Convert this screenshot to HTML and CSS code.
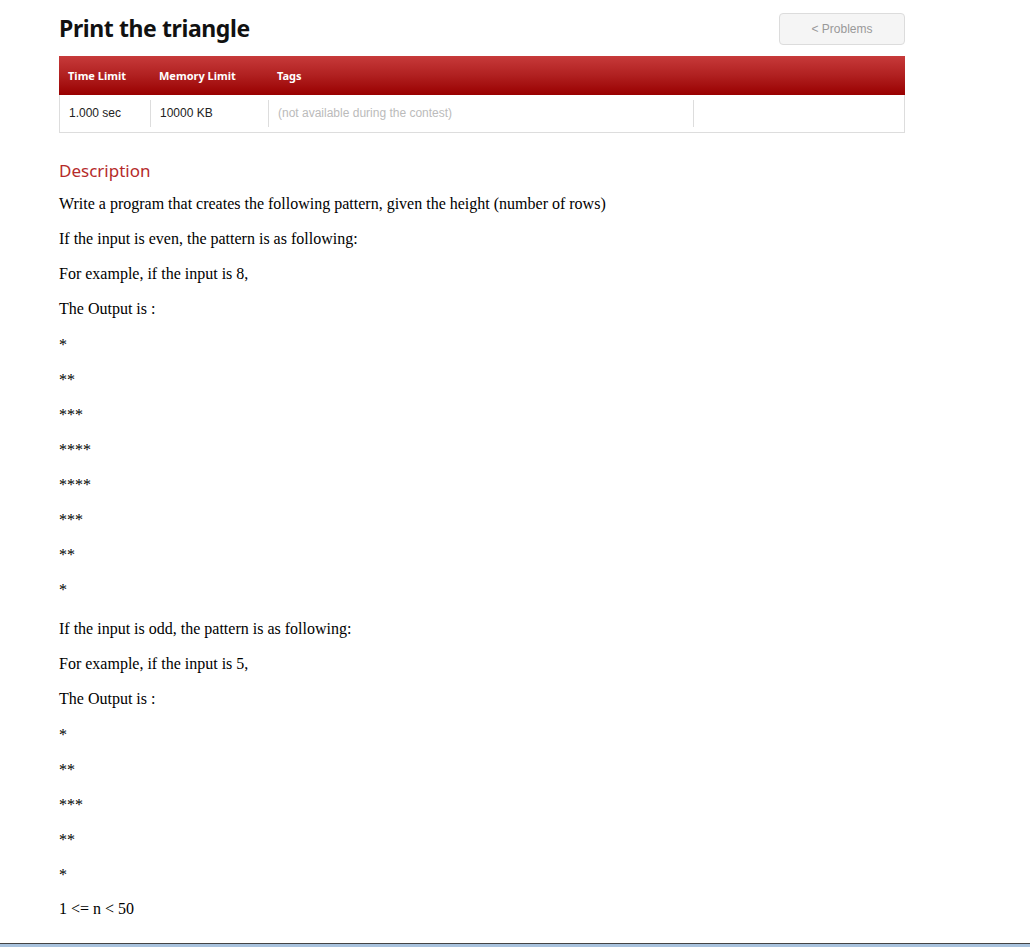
FILE: index.html
```html
<!DOCTYPE html>
<html>
<head>
<meta charset="utf-8">
<link rel="stylesheet" href="styles.css">
</head>
<body>
<div class="page">
  <div class="top">
    <h1 class="title">Print the triangle</h1>
    <a class="btn">&lt; Problems</a>
  </div>
  <div class="info">
    <div class="info-head">
      <div class="c1">Time Limit</div>
      <div class="c2">Memory Limit</div>
      <div class="c3">Tags</div>
      <div class="c4"></div>
    </div>
    <div class="info-body">
      <div class="c1">1.000 sec</div>
      <div class="c2 sep">10000 KB</div>
      <div class="c3 sep muted">(not available during the contest)</div>
      <div class="c4 sep"></div>
    </div>
  </div>
  <h2 class="section">Description</h2>
  <div class="desc">
    <p>Write a program that creates the following pattern, given the height (number of rows)</p>
    <p>If the input is even, the pattern is as following:</p>
    <p>For example, if the input is 8,</p>
    <p>The Output is :</p>
    <p class="star">*</p>
    <p class="star">**</p>
    <p class="star">***</p>
    <p class="star">****</p>
    <p class="star">****</p>
    <p class="star">***</p>
    <p class="star">**</p>
    <p class="star">*</p>
    <p class="gap">If the input is odd, the pattern is as following:</p>
    <p>For example, if the input is 5,</p>
    <p>The Output is :</p>
    <p class="star">*</p>
    <p class="star">**</p>
    <p class="star">***</p>
    <p class="star">**</p>
    <p class="star">*</p>
    <p>1 &lt;= n &lt; 50</p>
  </div>
</div>
<div class="bottombar"></div>
</body>
</html>
```
FILE: styles.css
```css
html, body {
  margin: 0;
  padding: 0;
  background: #fff;
}
body {
  font-family: "Liberation Serif", serif;
  color: #111;
}
.page {
  width: 846px;
  margin-left: 59px;
  padding-top: 13px;
}
.top {
  display: flex;
  justify-content: space-between;
  align-items: flex-start;
  height: 43px;
}
.title {
  margin: 0;
  font-family: "Noto Sans", sans-serif;
  font-weight: bold;
  font-size: 23px;
  line-height: 31px;
  color: #111;
  letter-spacing: -0.4px;
}
.btn {
  box-sizing: border-box;
  width: 126px;
  height: 32px;
  border: 1px solid #dcdcdc;
  border-radius: 4px;
  background: #f5f5f5;
  color: #999;
  font-family: "Liberation Sans", sans-serif;
  font-size: 12px;
  line-height: 30px;
  text-align: center;
}
.info {
  border: 1px solid #ddd;
  border-top: none;
}
.info-head {
  display: flex;
  height: 39px;
  margin: 0 -1px;
  background: linear-gradient(to bottom, #c73a3a 0%, #b02020 50%, #990000 100%);
  align-items: center;
  color: #fff;
  font-family: "Noto Sans", sans-serif;
  font-weight: bold;
  font-size: 11px;
}
.info-head > div {
  padding-left: 9px;
  box-sizing: border-box;
}
.c1 { width: 91px; }
.c2 { width: 118px; }
.c3 { width: 425px; }
.c4 { flex: 1; }
.info-body {
  display: flex;
  height: 37px;
  align-items: center;
  font-family: "Liberation Sans", sans-serif;
  font-size: 12px;
  color: #222;
}
.info-body > div {
  box-sizing: border-box;
  padding-left: 9px;
  height: 27px;
  line-height: 27px;
}
.info-body .sep {
  border-left: 1px solid #ddd;
}
.info-body .c1 { width: 90px; }
.muted { color: #bbb; }
.section {
  margin: 27px 0 0;
  font-family: "Noto Sans", sans-serif;
  font-weight: normal;
  font-size: 17px;
  line-height: 21px;
  color: #b52a2a;
}
.desc {
  margin-top: 13px;
}
.desc p {
  margin: 0 0 15px;
  font-size: 16px;
  line-height: 20px;
  color: #000;
}
.desc p.star {
  padding-top: 1px;
  margin-bottom: 14px;
}
.desc p.gap {
  margin-top: 19px;
}
.bottombar {
  position: fixed;
  left: 0;
  right: 0;
  bottom: 0;
  height: 3px;
  border-top: 1px solid #444;
  background: #a8c2dd;
}
```
